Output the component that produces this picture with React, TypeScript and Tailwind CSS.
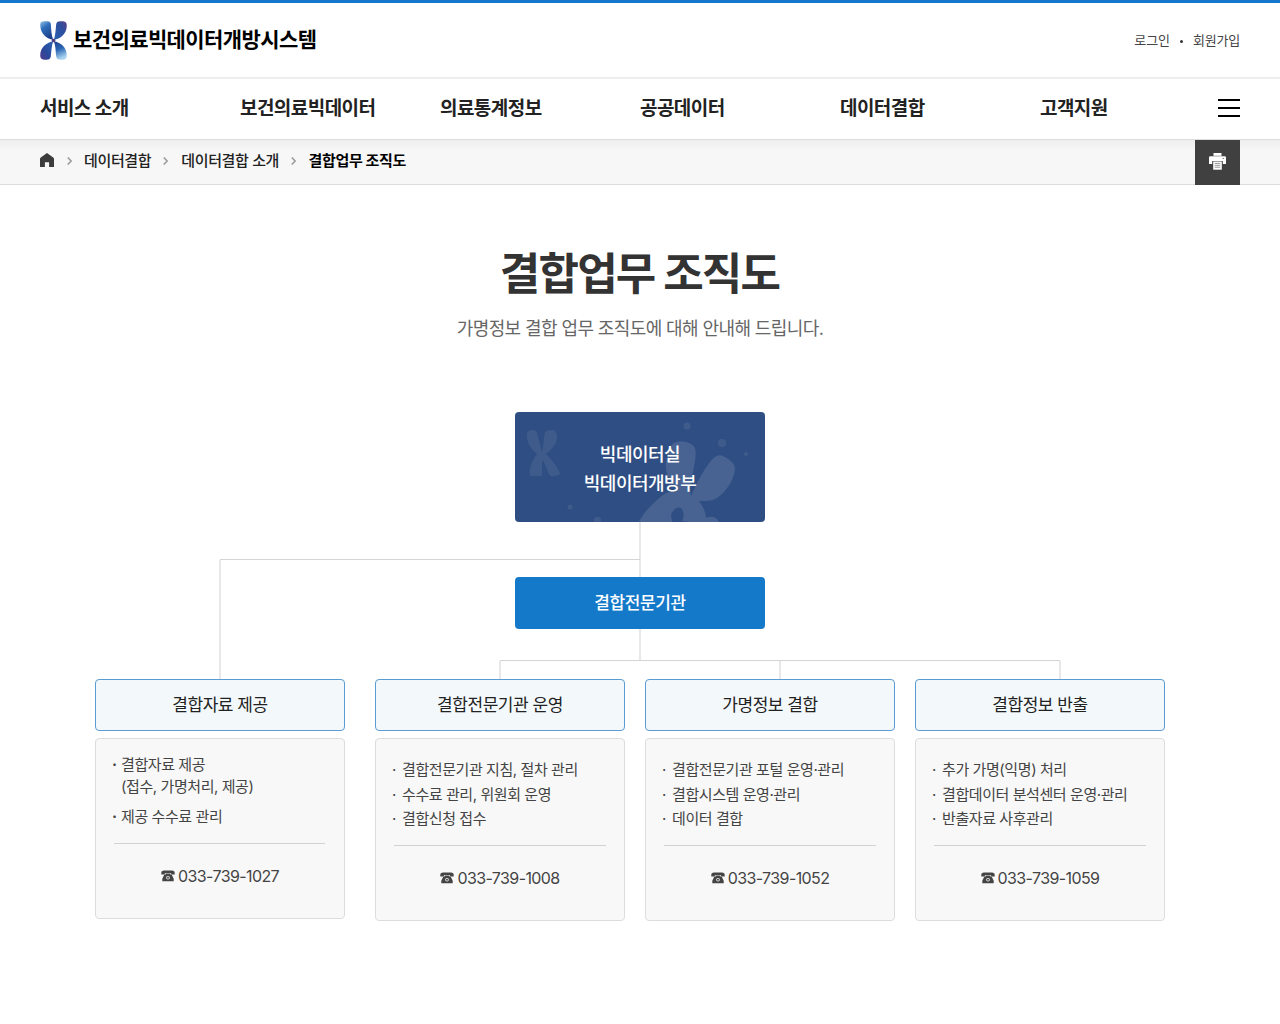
import type { ReactNode } from 'react';

type Team = {
  title: string;
  duties: { text: string; sub?: string }[];
  phone: string;
};

const menus = ['서비스 소개', '보건의료빅데이터', '의료통계정보', '공공데이터', '데이터결합', '고객지원'];

const supply: Team = {
  title: '결합자료 제공',
  duties: [{ text: '결합자료 제공', sub: '(접수, 가명처리, 제공)' }, { text: '제공 수수료 관리' }],
  phone: '033-739-1027',
};

const teams: Team[] = [
  {
    title: '결합전문기관 운영',
    duties: [{ text: '결합전문기관 지침, 절차 관리' }, { text: '수수료 관리, 위원회 운영' }, { text: '결합신청 접수' }],
    phone: '033-739-1008',
  },
  {
    title: '가명정보 결합',
    duties: [{ text: '결합전문기관 포털 운영·관리' }, { text: '결합시스템 운영·관리' }, { text: '데이터 결합' }],
    phone: '033-739-1052',
  },
  {
    title: '결합정보 반출',
    duties: [{ text: '추가 가명(익명) 처리' }, { text: '결합데이터 분석센터 운영·관리' }, { text: '반출자료 사후관리' }],
    phone: '033-739-1059',
  },
];

function LogoMark() {
  return (
    <svg viewBox="0 0 26 39" className="h-[39px] w-[27px]" preserveAspectRatio="none" aria-hidden>
      <defs>
        <linearGradient id="lm-a" x1="0" y1="0" x2=".5" y2="1">
          <stop offset="0" stopColor="#8fc4e8" />
          <stop offset=".4" stopColor="#2f6fba" />
          <stop offset="1" stopColor="#1d3f8c" />
        </linearGradient>
        <linearGradient id="lm-b" x1="1" y1="0" x2="0" y2="1">
          <stop offset="0" stopColor="#5b3f8c" />
          <stop offset=".4" stopColor="#2b4f9e" />
          <stop offset="1" stopColor="#2a62b3" />
        </linearGradient>
        <linearGradient id="lm-c" x1="1" y1="0" x2="0" y2="1">
          <stop offset="0" stopColor="#2a62b3" />
          <stop offset=".6" stopColor="#2a489a" />
          <stop offset="1" stopColor="#563a8b" />
        </linearGradient>
        <linearGradient id="lm-d" x1="0" y1="0" x2=".3" y2="1">
          <stop offset="0" stopColor="#1d3f8c" />
          <stop offset=".5" stopColor="#2a66b5" />
          <stop offset="1" stopColor="#a9d3ef" />
        </linearGradient>
      </defs>
      <path d="M.2 4C.2 1 1.500.2 5 .2h2c2.500 0 3.300 1 3.500 3.500.3 5 .4 10 2.200 15.200C7 18 .2 13 .2 4Z" fill="url(#lm-a)" />
      <path d="M25.800 4.500c0-3.300-1.600-4.300-4.700-4.300h-1.300c-3 0-4 1-4.300 3.800-.5 5-.6 10-2.200 14.900C19.500 18 25.800 13 25.800 4.500Z" fill="url(#lm-b)" />
      <path d="M.2 34.500c0 3 1.600 4.300 4.700 4.300h1.300c3 0 4-1.200 4.300-4 .5-5 .6-10 2.200-14.600C7 21 .2 26 .2 34.500Z" fill="url(#lm-c)" />
      <path d="M25.800 34.500c0 3-1.500 4.300-4.500 4.300h-1.500c-3 0-4-1.200-4.300-4-.5-5-.4-10-2.200-14.600C19.500 21 25.800 26 25.800 34.500Z" fill="url(#lm-d)" />
      <circle cx="13" cy="19.500" r="1.800" fill="#4f3f7c" />
    </svg>
  );
}

function HomeIcon() {
  return (
    <svg viewBox="0 0 14 14" className="-mt-[4px] h-[14px] w-[14px]" aria-hidden>
      <path d="M7 0 .8 4.500 0 5.600V14h4.900V9.200h4.200V14H14V5.600l-.8-1.100Z" fill="#3c3c3c" />
    </svg>
  );
}

function Chevron() {
  return (
    <svg viewBox="0 0 5 8" className="-mt-[2px] h-2 w-[5px]" fill="none" aria-hidden>
      <path d="M.7.500 4.200 4 .7 7.500" stroke="#999" strokeWidth="1.500" />
    </svg>
  );
}

function PrintIcon() {
  return (
    <svg viewBox="0 0 17 17" className="-mt-[2px] h-[17px] w-[17px]" aria-hidden>
      <path d="M4.500 0h8v2.800h-8z" fill="#fff" />
      <path d="M1.200 3.300h14.600A1.200 1.200 0 0 1 17 4.500V11h-3.200V8H3.200v3H0V4.500a1.200 1.200 0 0 1 1.200-1.200Z" fill="#fff" />
      <path d="M4.200 8.500h8.600v8.200H4.200Z" fill="#fff" />
      <path d="M5.700 10.400h5.600M5.700 12.300h5.600M5.700 14.200h5.600" stroke="#999" strokeWidth="1" />
      <path d="M13.600 5.400h1.500" stroke="#777" />
    </svg>
  );
}

function PhoneIcon() {
  return (
    <svg viewBox="0 0 14 12" className="h-[12px] w-[14px]" aria-hidden>
      <path d="M3 .6h8c1.700 0 2.700.9 2.700 2.300v1.500h-3.600V3.100H3.900v1.300H.3V2.900C.3 1.500 1.300.6 3 .6Z" fill="#444" />
      <path
        fillRule="evenodd"
        d="M4.500 3.600h5v1.100h1.300l1.900 4v2.600H1.300V8.700l1.900-4h1.300ZM7 5.900a1.800 1.800 0 1 0 0 3.600 1.800 1.800 0 0 0 0-3.600Zm0 .8a1 1 0 1 1 0 2 1 1 0 0 1 0-2Z"
        fill="#444"
      />
    </svg>
  );
}

function ChromosomePattern() {
  return (
    <svg viewBox="0 0 250 110" className="absolute inset-0 h-full w-full" aria-hidden>
      <g fill="#fff" fillOpacity=".08">
        <path d="M12 24c-1-3 1-5 4-6 3 0 5 0 6 3l5 19c2-6 1-13 3-19 1-3 4-3 7-3 4 0 5 3 5 7 0 7-5 12-11 17 6 6 11 12 14 19 0 2-2 2-5 3-3 1-5 0-6-2l-6-14-1 2v14H15c-1-7 1-14 7-22-6-5-10-11-10-18Z" />
        <circle cx="172" cy="14" r="3.500" />
        <circle cx="207" cy="31" r="4" />
        <circle cx="231" cy="42" r="2" />
        <circle cx="55" cy="95" r="2.500" />
        <path d="M79 110v-3c1-3 6-3 7 0v3z" />
      </g>
      <g fill="#fff" fillOpacity=".12">
        <path d="M151 52c1-10 3-18 8-21 7-3 18-1 21 5 2 7-1 18-3 29-2 8-2 13-1 19 5-11 11-24 19-34 4-5 8-8 13-6 6 3 12 7 12 13-1 11-9 23-18 29-5 3-10 3-18 3 5 7 7 12 7 17 5-2 10-2 13 4h-30l-7-1c2-3 2-9 0-12-5-4-9 1-11 6l1 7h-33c3-7 12-18 24-27 6-4 10-5 15-5-8-8-13-16-12-26Z" />
      </g>
    </svg>
  );
}

// tree lines between the boxes, origin is the lower edge of the top box
function Connectors() {
  return (
    <svg viewBox="0 0 1070 157" className="absolute left-0 top-[110px] h-[157px] w-[1070px]" shapeRendering="crispEdges" aria-hidden>
      <g fill="#e8e8e8">
        <rect x="544" y="0" width="2" height="138" />
        <rect x="124" y="38" width="2" height="119" />
        <rect x="404" y="139" width="2" height="18" />
        <rect x="684" y="139" width="2" height="18" />
        <rect x="964" y="139" width="2" height="18" />
      </g>
      <g fill="#d4d4d4">
        <rect x="125" y="37" width="420" height="1" />
        <rect x="405" y="138" width="560" height="1" />
      </g>
    </svg>
  );
}

function Head({ children }: { children: ReactNode }) {
  return (
    <h2 className="flex h-[52px] items-center justify-center rounded-[4px] border border-[#5b9bd3] bg-[#f3f8fb] pt-px text-[17px] tracking-[-0.45px] text-[#222]">
      {children}
    </h2>
  );
}

function Phone({ n }: { n: string }) {
  return (
    <p className="flex items-center justify-center gap-[3px] text-[16px] leading-6 tracking-[-0.6px] text-[#444]">
      <PhoneIcon />
      {n}
    </p>
  );
}

function SupplyCard({ t }: { t: Team }) {
  return (
    <section className="w-[250px]">
      <Head>{t.title}</Head>
      <div className="mt-[7px] h-[181px] rounded-[4px] border border-[#ddd] bg-[#f8f8f8] px-[17px] pt-[15px]">
        <ul className="flex flex-col gap-2 text-[15px] leading-[22px] tracking-[-0.42px] text-[#444]">
          {t.duties.map((d) => (
            <li key={d.text} className="flex">
              <span className="-ml-px w-[9px] font-bold">·</span>
              <span>
                {d.text}
                {d.sub && <span className="block">{d.sub}</span>}
              </span>
            </li>
          ))}
        </ul>
        <hr className="mt-[15px] mb-5 ml-px w-[211px] border-[#d2d2d2]" />
        <Phone n={t.phone} />
      </div>
    </section>
  );
}

function TeamCard({ t }: { t: Team }) {
  return (
    <section className="w-[250px]">
      <Head>{t.title}</Head>
      <div className="mt-[7px] h-[183px] rounded-[4px] border border-[#ddd] bg-[#f8f8f8] px-[17px] pt-[19px]">
        <ul className="text-[15px] leading-[24.5px] tracking-[-0.42px] text-[#444]">
          {t.duties.map((d) => (
            <li key={d.text} className="flex whitespace-nowrap">
              <span className="-ml-px w-[10px]">·</span>
              {d.text}
            </li>
          ))}
        </ul>
        <hr className="mt-[13px] mb-5 ml-px w-[212px] border-[#d2d2d2]" />
        <Phone n={t.phone} />
      </div>
    </section>
  );
}

export default function App() {
  return (
    <div className="min-h-screen overflow-hidden bg-white font-['Inter','Noto_Sans_CJK_KR',sans-serif] text-[#222]">
      <header>
        <div className="h-[79px] border-t-[3px] border-b-2 border-t-[#1576cc] border-b-[#eee]">
          <div className="mx-auto flex h-[74px] w-[1200px] items-center justify-between">
            <h1 className="flex items-center gap-[6px] text-[21px] font-bold tracking-[-0.6px] text-black">
              <LogoMark />
              <span className="-mt-px">보건의료빅데이터개방시스템</span>
            </h1>
            <div className="flex items-center pt-[2px] text-[13px] tracking-[-0.1px] text-[#444]">
              <a href="#">로그인</a>
              <span className="mx-[10px] h-[3px] w-[3px] rounded-full bg-[#333]" />
              <a href="#" className="tracking-[-0.2px]">회원가입</a>
            </div>
          </div>
        </div>
        <nav className="border-b border-[#ddd]">
          <div className="mx-auto flex h-[60px] w-[1200px] items-center">
            {menus.map((m) => (
              <a key={m} href="#" className="w-[200px] shrink-0 pt-px text-[19px] font-bold tracking-[-0.55px] last-of-type:w-[178px]">
                {m}
              </a>
            ))}
            <button type="button" aria-label="전체메뉴" className="-mt-[2px] flex w-[22px] shrink-0 flex-col gap-[6px]">
              <span className="h-[2px] bg-black" />
              <span className="h-[2px] bg-black" />
              <span className="h-[2px] bg-black" />
            </button>
          </div>
        </nav>
        <div className="border-b border-[#ddd] bg-linear-to-b from-[#eeeeee] to-[#f7f7f7] to-25%">
          <div className="mx-auto flex h-[44px] w-[1200px] items-center text-[15px] font-medium tracking-[-0.35px]">
            <HomeIcon />
            <span className="ml-[13px] mr-[12px]"><Chevron /></span>
            <a href="#" className="-mt-px">데이터결합</a>
            <span className="ml-[12px] mr-[13px]"><Chevron /></span>
            <a href="#" className="-mt-px">데이터결합 소개</a>
            <span className="ml-[12px] mr-[12.5px]"><Chevron /></span>
            <strong className="-mt-px text-black">결합업무 조직도</strong>
            <button type="button" aria-label="인쇄" className="-mb-px ml-auto grid h-[45px] w-[45px] place-items-center bg-[#404040]">
              <PrintIcon />
            </button>
          </div>
        </div>
      </header>

      <main className="pt-[57px] text-center">
        <h2 className="pr-px text-[44px] leading-[64px] font-bold tracking-[-1.8px] text-[#333]">결합업무 조직도</h2>
        <p className="mt-[9px] text-[18px] leading-[28px] tracking-[-0.6px] text-[#666]">
          가명정보 결합 업무 조직도에 대해 안내해 드립니다.
        </p>

        <div className="relative mt-[69px] ml-[95px] w-[1070px]">
          <Connectors />
          <div className="relative ml-[420px] flex h-[110px] w-[250px] items-center justify-center overflow-hidden rounded-[4px] bg-[#2f4e83]">
            <ChromosomePattern />
            <p className="relative pt-[3px] text-[18px] leading-[29px] font-medium tracking-[-0.5px] text-white">
              빅데이터실
              <br />
              빅데이터개방부
            </p>
          </div>
          <div className="relative mt-[55px] ml-[420px] flex h-[52px] w-[250px] items-center justify-center rounded-[4px] bg-[#1579c9] pt-px text-[17px] font-medium tracking-[-0.4px] text-white">
            결합전문기관
          </div>
          <div className="relative mt-[50px] flex gap-[30px] text-left">
            <SupplyCard t={supply} />
            <div className="flex gap-5">
              {teams.map((t) => (
                <TeamCard key={t.title} t={t} />
              ))}
            </div>
          </div>
        </div>
      </main>
    </div>
  );
}
